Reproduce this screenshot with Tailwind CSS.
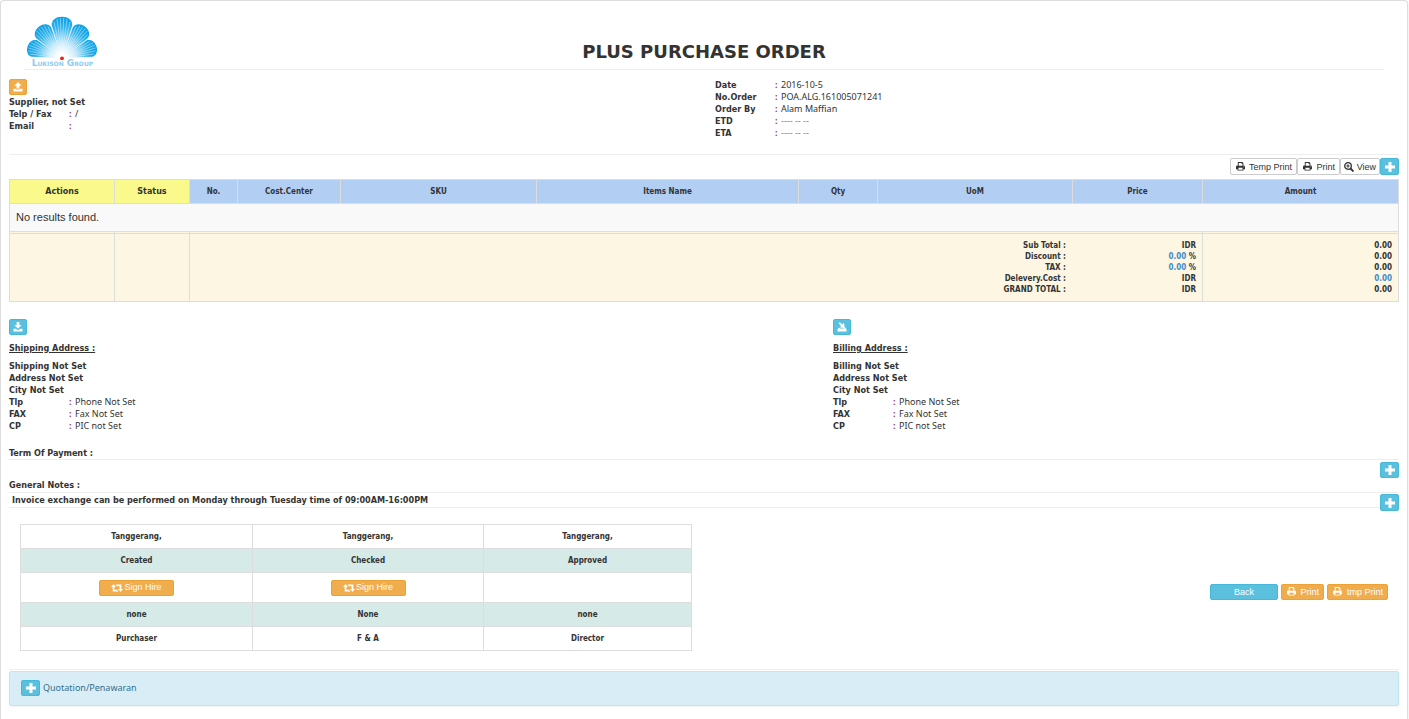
<!DOCTYPE html>
<html lang="en">
<head>
<meta charset="utf-8">
<meta name="viewport" content="width=device-width, initial-scale=1">
<title>Plus Purchase Order</title>
<script src="https://cdn.jsdelivr.net/npm/@tailwindcss/browser@4"></script>
</head>
<body class="bg-white font-['Noto_Sans','Open_Sans',sans-serif] text-[9px] leading-3 text-[#333] [&_dt]:font-['DejaVu_Sans_Condensed','DejaVu_Sans',sans-serif] [&_h2]:font-['DejaVu_Sans_Condensed','DejaVu_Sans',sans-serif] [&_p]:font-['DejaVu_Sans_Condensed','DejaVu_Sans',sans-serif]">
<svg class="hidden" aria-hidden="true">
  <symbol id="plus" viewBox="0 0 10 10"><path fill="currentColor" d="M3.5 0h3v3.500H10v3H6.500V10h-3V6.500H0v-3h3.500z"/></symbol>
  <symbol id="print" viewBox="0 0 10 10"><path fill="currentColor" fill-rule="evenodd" d="M2 0h5l1.200 1.200V4H9q1 .3 1 1.200V8H8.300v1.500H1.700V8H0V5.200Q0 4.300 1 4h1zM3 1v3.200h4.200V2H6V1zM2.700 6.500v2h4.600v-2zM8.300 5v.8h.8V5z"/></symbol>
  <symbol id="zoom-in" viewBox="0 0 10 10"><g fill="none" stroke="currentColor"><circle cx="4" cy="4" r="3.300" stroke-width="1.300"/><path d="M4 2.300v3.400M2.300 4h3.400" stroke-width="1"/><path d="M6.500 6.500l3 3" stroke-width="1.800"/></g></symbol>
  <symbol id="upload" viewBox="0 0 10 10"><path fill="currentColor" d="M5 0l3.600 3.700H6.400V6.500H3.600V3.700H1.400zM.5 6.800h2.600v.6h3.800v-.6h2.600V9.500H.5z"/></symbol>
  <symbol id="download" viewBox="0 0 10 10"><path fill="currentColor" d="M3.600 0h2.800v3h2.200L5 6.700 1.400 3h2.200zM.5 6.800h2.300L4.300 8h1.400l1.500-1.200h2.300V9.500H.5z"/></symbol>
  <symbol id="saved" viewBox="0 0 10 10"><path fill="currentColor" d="M1.500 1L3 .2l2.200 2.400L7 .8l.8 5.400-5-.9 1.200-1.200zM2 5.500l1 1h4.300l1-1 1.200 2V9.500H.5v-2z"/></symbol>
  <symbol id="retweet" viewBox="0 0 12 10"><path fill="currentColor" d="M2.500 1L5 4H3.400v2.700h2.800L7.600 8.500H1.700V4H0zM4.400 1.500h6V6H12L9.500 9 7 6h1.700V3.300H5.900z"/></symbol>
</svg>
<main class="mr-px min-h-screen rounded-t-sm border border-b-0 border-[#ddd] px-2 shadow-sm">
  <header class="mx-[15px] grid h-[69px] grid-cols-3 items-end border-b border-[#eee]">
    <svg class="mb-px ml-px h-[52px] w-[74px]" viewBox="25 16 74 52" role="img" aria-label="Lukison Group">
      <defs>
        <radialGradient id="petalFill" gradientUnits="userSpaceOnUse" cx="0" cy="0" r="41"><stop offset=".08" stop-color="#fff"/><stop offset=".4" stop-color="#b4e3f8"/><stop offset=".75" stop-color="#2eb2ec"/><stop offset="1" stop-color="#0a9fe3"/></radialGradient>
        <g id="petal">
          <path fill="url(#petalFill)" d="M0 0L-10.300-33C-10.500-38-6-41.300 0-41.300S10.500-38 10.300-33z"/>
          <path stroke="#fff" stroke-opacity=".6" stroke-width=".7" fill="none" d="M0 0L-8-36M0 0L-5-39M0 0L-1.700-40M0 0L1.700-40M0 0L5-39M0 0L8-36"/>
        </g>
      </defs>
      <use href="#petal" transform="translate(62 58) rotate(-71) scale(.84 .88)"/>
      <use href="#petal" transform="translate(62 58) rotate(71) scale(.84 .88)"/>
      <use href="#petal" transform="translate(62 58) rotate(-36) scale(.9 .94)"/>
      <use href="#petal" transform="translate(62 58) rotate(36) scale(.9 .94)"/>
      <use href="#petal" transform="translate(62 58)"/>
      <circle cx="62" cy="58.300" r="1.900" fill="#e32619"/>
      <text x="62.500" y="66" text-anchor="middle" fill="#8acdf0" class="font-['DejaVu_Sans',sans-serif] text-[9px] font-bold [font-variant:small-caps]">Lukison Group</text>
    </svg>
    <h1 class="pb-[7px] text-center font-['DejaVu_Sans',sans-serif] text-lg leading-5 font-bold whitespace-nowrap">PLUS PURCHASE ORDER</h1>
  </header>

  <section class="mt-[9px] grid grid-cols-[706fr_684fr]">
    <div>
      <button aria-label="Upload supplier" class="mb-px flex h-4 w-[18px] items-center justify-center rounded-xs border border-[#eea236] bg-[#f0ad4e] text-white"><svg class="size-[10px]"><use href="#upload"/></svg></button>
      <p class="font-bold">Supplier, not Set</p>
      <dl class="grid grid-cols-[60px_6px_1fr]">
        <dt class="font-bold">Telp / Fax</dt><dd class="font-bold text-[#937]">:</dd><dd>/</dd>
        <dt class="font-bold">Email</dt><dd class="font-bold text-[#937]">:</dd><dd></dd>
      </dl>
    </div>
    <dl class="grid grid-cols-[60px_6px_1fr] content-start">
      <dt class="font-bold">Date</dt><dd class="font-bold text-[#937]">:</dd><dd>2016-10-5</dd>
      <dt class="font-bold">No.Order</dt><dd class="font-bold text-[#937]">:</dd><dd>POA.ALG.161005071241</dd>
      <dt class="font-bold">Order By</dt><dd class="font-bold text-[#937]">:</dd><dd>Alam Maffian</dd>
      <dt class="font-bold">ETD</dt><dd class="font-bold text-[#937]">:</dd><dd><a href="#" class="text-[#428bca]">---- -- --</a></dd>
      <dt class="font-bold">ETA</dt><dd class="font-bold text-[#937]">:</dd><dd><a href="#" class="text-[#428bca]">---- -- --</a></dd>
    </dl>
  </section>

  <div class="mt-[15px] flex justify-end border-t border-[#eee] pt-[3px] font-['Liberation_Sans',sans-serif] text-[9px] whitespace-nowrap">
    <button class="flex h-[17px] w-[67px] items-center justify-between rounded-xs border border-[#ccc] px-1"><svg class="ml-px size-[9px]"><use href="#print"/></svg>Temp Print</button>
    <button class="flex h-[17px] w-[43px] items-center justify-between rounded-xs border border-[#ccc] px-1"><svg class="ml-px size-[9px]"><use href="#print"/></svg>Print</button>
    <button class="flex h-[17px] w-10 items-center justify-between rounded-xs border border-[#ccc] px-[3px]"><svg class="size-[10px]"><use href="#zoom-in"/></svg>View</button>
    <button aria-label="Add item" class="flex h-[17px] w-[19px] items-center justify-center rounded-xs border border-[#46b8da] bg-[#5bc0de] text-white"><svg class="size-[10px]"><use href="#plus"/></svg></button>
  </div>

  <table class="mt-1 w-full table-fixed border-collapse font-['DejaVu_Sans_Condensed','DejaVu_Sans',sans-serif] text-[8px] leading-[11px] [&_td]:border [&_td]:border-[#ddd] [&_th]:border [&_th]:border-[#ddd]">
    <colgroup><col class="w-[105px]"><col class="w-[75px]"><col class="w-[48px]"><col class="w-[103px]"><col class="w-[196px]"><col class="w-[262px]"><col class="w-[79px]"><col class="w-[195px]"><col class="w-[130px]"><col class="w-[196px]"></colgroup>
    <thead>
      <tr class="h-6 bg-[#b3cef3]"><th class="bg-[#fafa8c] font-['DejaVu_Sans',sans-serif]">Actions</th><th class="bg-[#fafa8c] font-['DejaVu_Sans',sans-serif]">Status</th><th>No.</th><th>Cost.Center</th><th>SKU</th><th>Items Name</th><th>Qty</th><th>UoM</th><th>Price</th><th>Amount</th></tr>
    </thead>
    <tbody>
      <tr class="h-7 bg-[#f9f9f9]"><td colspan="10" class="px-[6px] font-['Liberation_Sans',sans-serif] text-[11px]">No results found.</td></tr>
    </tbody>
    <tfoot class="bg-[#fdf6e3] text-right font-bold">
      <tr class="h-[2px]"><td class="p-0"></td><td class="p-0"></td><td colspan="7" class="p-0"></td><td class="p-0"></td></tr>
      <tr class="h-[68px]">
        <td></td><td></td>
        <td colspan="7" class="pr-[6px]">
          <div class="grid grid-cols-[1fr_130px]">
            <span>Sub Total :</span><span>IDR</span>
            <span>Discount :</span><span><a href="#" class="text-[#428bca]">0.00</a> %</span>
            <span>TAX :</span><span><a href="#" class="text-[#428bca]">0.00</a> %</span>
            <span>Delevery.Cost :</span><span>IDR</span>
            <span>GRAND TOTAL :</span><span>IDR</span>
          </div>
        </td>
        <td class="pr-[6px]"><div>0.00</div><div>0.00</div><div>0.00</div><div><a href="#" class="text-[#428bca]">0.00</a></div><div>0.00</div></td>
      </tr>
    </tfoot>
  </table>

  <section class="mt-[17px] grid grid-cols-[824fr_566fr]">
    <div>
      <button aria-label="Set shipping address" class="flex h-4 w-[18px] items-center justify-center rounded-xs border border-[#46b8da] bg-[#5bc0de] text-white"><svg class="size-[10px]"><use href="#download"/></svg></button>
      <h2 class="mt-[7px] font-bold underline">Shipping Address :</h2>
      <p class="mt-[6px] font-bold">Shipping Not Set<br>Address Not Set<br>City Not Set</p>
      <dl class="grid grid-cols-[60px_6px_1fr]">
        <dt class="font-bold">Tlp</dt><dd class="font-bold text-[#937]">:</dd><dd>Phone Not Set</dd>
        <dt class="font-bold">FAX</dt><dd class="font-bold text-[#937]">:</dd><dd>Fax Not Set</dd>
        <dt class="font-bold">CP</dt><dd class="font-bold text-[#937]">:</dd><dd>PIC not Set</dd>
      </dl>
    </div>
    <div>
      <button aria-label="Set billing address" class="flex h-4 w-[18px] items-center justify-center rounded-xs border border-[#46b8da] bg-[#5bc0de] text-white"><svg class="size-[10px]"><use href="#saved"/></svg></button>
      <h2 class="mt-[7px] font-bold underline">Billing Address :</h2>
      <p class="mt-[6px] font-bold">Billing Not Set<br>Address Not Set<br>City Not Set</p>
      <dl class="grid grid-cols-[60px_6px_1fr]">
        <dt class="font-bold">Tlp</dt><dd class="font-bold text-[#937]">:</dd><dd>Phone Not Set</dd>
        <dt class="font-bold">FAX</dt><dd class="font-bold text-[#937]">:</dd><dd>Fax Not Set</dd>
        <dt class="font-bold">CP</dt><dd class="font-bold text-[#937]">:</dd><dd>PIC not Set</dd>
      </dl>
    </div>
  </section>

  <h2 class="mt-[15px] border-b border-[#eee] font-bold">Term Of Payment :</h2>
  <div class="flex h-[33px] justify-between border-b border-[#eee] pb-px">
    <h2 class="self-end font-bold">General Notes :</h2>
    <button aria-label="Add term of payment" class="mt-[2px] flex h-4 w-[19px] items-center justify-center rounded-xs border border-[#46b8da] bg-[#5bc0de] text-white"><svg class="size-[10px]"><use href="#plus"/></svg></button>
  </div>
  <div class="flex h-[15px] justify-between border-b border-[#eee]">
    <p class="pt-px pl-[3px] font-bold">Invoice exchange can be performed on Monday through Tuesday time of 09:00AM-16:00PM</p>
    <button aria-label="Add general note" class="mt-px flex h-[17px] w-[19px] shrink-0 items-center justify-center rounded-xs border border-[#46b8da] bg-[#5bc0de] text-white"><svg class="size-[10px]"><use href="#plus"/></svg></button>
  </div>

  <section class="mt-4 flex items-center justify-between pr-[11px] pl-[11px]">
    <table class="w-[49%] table-fixed border-collapse text-center font-['DejaVu_Sans_Condensed','DejaVu_Sans',sans-serif] text-[8px] leading-[11px] font-bold [&_td]:border [&_td]:border-[#ddd]">
      <colgroup><col class="w-[232px]"><col class="w-[231px]"><col class="w-[208px]"></colgroup>
      <tbody>
        <tr class="h-6"><td>Tanggerang,</td><td>Tanggerang,</td><td>Tanggerang,</td></tr>
        <tr class="h-6 bg-[#d6eae8]"><td>Created</td><td>Checked</td><td>Approved</td></tr>
        <tr class="h-[30px]">
          <td><button class="mx-auto flex h-4 w-[75px] items-center justify-center gap-px rounded-xs border border-[#eea236] bg-[#f0ad4e] font-['Liberation_Sans',sans-serif] text-[9px] font-normal text-white"><svg class="h-[10px] w-3"><use href="#retweet"/></svg>Sign Hire</button></td>
          <td><button class="mx-auto flex h-4 w-[75px] items-center justify-center gap-px rounded-xs border border-[#eea236] bg-[#f0ad4e] font-['Liberation_Sans',sans-serif] text-[9px] font-normal text-white"><svg class="h-[10px] w-3"><use href="#retweet"/></svg>Sign Hire</button></td>
          <td></td>
        </tr>
        <tr class="h-6 bg-[#d6eae8]"><td>none</td><td>None</td><td>none</td></tr>
        <tr class="h-6"><td>Purchaser</td><td>F &amp; A</td><td>Director</td></tr>
      </tbody>
    </table>
    <div class="mt-2 flex gap-[3px] font-['Liberation_Sans',sans-serif] text-[9px] whitespace-nowrap text-white">
      <button class="h-4 w-[68px] rounded-xs border border-[#46b8da] bg-[#5bc0de]">Back</button>
      <button class="flex h-4 w-[43px] items-center justify-between rounded-xs border border-[#eea236] bg-[#f0ad4e] px-1"><svg class="ml-px size-[9px]"><use href="#print"/></svg>Print</button>
      <button class="flex h-4 w-[61px] items-center justify-between rounded-xs border border-[#eea236] bg-[#f0ad4e] px-1"><svg class="ml-px size-[9px]"><use href="#print"/></svg>tmp Print</button>
    </div>
  </section>

  <div class="mt-[18px] border-t border-[#eee] pt-px">
    <div class="flex h-[35px] items-center gap-[3px] rounded-xs border border-[#bce8f1] bg-[#d9edf7] px-[11px] pb-px text-[#31708f] shadow-xs">
      <button aria-label="Add quotation" class="flex h-4 w-[19px] items-center justify-center rounded-xs border border-[#46b8da] bg-[#5bc0de] text-white"><svg class="size-[10px]"><use href="#plus"/></svg></button>
      <span>Quotation/Penawaran</span>
    </div>
  </div>
</main>
</body>
</html>
